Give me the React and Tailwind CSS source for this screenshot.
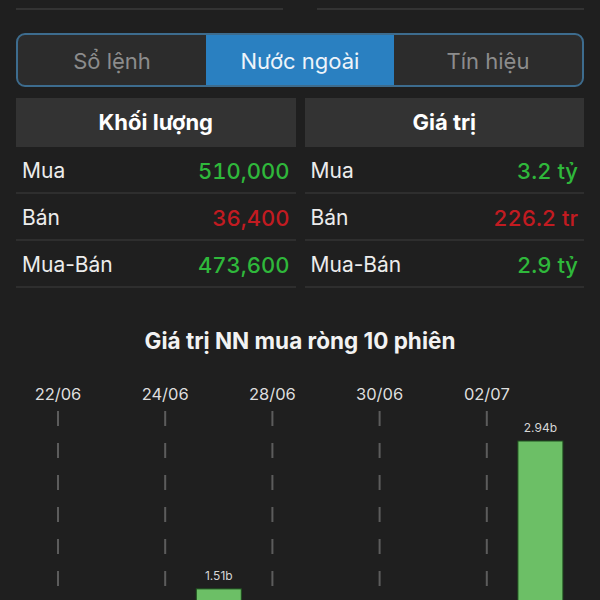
const rowsVolume = [
  { label: 'Mua', value: '510,000', color: 'text-[#2fb83b]' },
  { label: 'Bán', value: '36,400', color: 'text-[#c21b21]' },
  { label: 'Mua-Bán', value: '473,600', color: 'text-[#2fb83b]' },
];

const rowsValue = [
  { label: 'Mua', value: '3.2 tỷ', color: 'text-[#2fb83b]' },
  { label: 'Bán', value: '226.2 tr', color: 'text-[#c21b21]' },
  { label: 'Mua-Bán', value: '2.9 tỷ', color: 'text-[#2fb83b]' },
];

const dates = ['22/06', '24/06', '28/06', '30/06', '02/07'];

function StatColumn({ title, rows }) {
  return (
    <div>
      <div className="flex h-[49px] items-center justify-center bg-[#333333] text-[22px] font-bold text-white">
        {title}
      </div>
      {rows.map((r) => (
        <div
          key={r.label}
          className="flex h-[47px] items-center justify-between border-b-2 border-[#2e2e2e] px-[6px] pt-[3px] text-[21px]"
        >
          <span className="text-[#ececec]">{r.label}</span>
          <span className={`${r.color} text-[22px] font-medium tabular-nums`}>{r.value}</span>
        </div>
      ))}
    </div>
  );
}

function NetChart() {
  const step = 53.6;
  const start = 58;
  const base = 743 - 370;
  const bars = [
    { i: 3, v: 1.51, label: '1.51b' },
    { i: 9, v: 2.94, label: '2.94b' },
  ];
  const k = (base - 69) / 2.94;
  return (
    <svg width="600" height="230" className="mt-[16px] block">
      {dates.map((d, n) => {
        const x = start + step * 2 * n;
        return (
          <g key={d}>
            <text
              x={x}
              y="28"
              textAnchor="middle"
              fill="#dedede"
              fontSize="16.5"
              fontFamily="Inter, sans-serif"
            >
              {d}
            </text>
            <line
              x1={x}
              x2={x}
              y1="39"
              y2="230"
              stroke="#5c5c5c"
              strokeWidth="2"
              strokeDasharray="15 17"
            />
          </g>
        );
      })}
      {bars.map((b) => {
        const cx = start + step * b.i;
        const h = b.v * k;
        return (
          <g key={b.label}>
            <rect
              x={cx - 22.5}
              y={base - h}
              width="45"
              height={h}
              fill="#6cbf66"
              stroke="#1e4f1e"
              strokeWidth="1"
            />
            <text
              x={cx}
              y={base - h - 9}
              textAnchor="middle"
              fill="#d6d6d6"
              fontSize="12"
              fontFamily="Inter, sans-serif"
            >
              {b.label}
            </text>
          </g>
        );
      })}
    </svg>
  );
}

export default function App() {
  return (
    <div className="h-[600px] overflow-hidden bg-[#1f1f1f] font-['Inter',sans-serif]">
      <div className="flex gap-[34px] px-4 pt-2">
        <div className="h-[2px] flex-1 bg-[#333333]" />
        <div className="h-[2px] flex-1 bg-[#333333]" />
      </div>

      <div className="mx-4 mt-[23px] flex h-[54px] overflow-hidden rounded-[9px] border-2 border-[#3d6c8e] bg-[#2c2c2c] text-[22px]">
        <div className="flex flex-1 items-center justify-center pt-[2px] text-[#8c8c8c]">Sổ lệnh</div>
        <div className="flex flex-1 items-center justify-center bg-[#2a80c1] pt-[2px] text-[#eef4fa]">
          Nước ngoài
        </div>
        <div className="flex flex-1 items-center justify-center pt-[2px] text-[#8c8c8c]">Tín hiệu</div>
      </div>

      <div className="mt-[11px] grid grid-cols-2 gap-[9px] px-4">
        <StatColumn title="Khối lượng" rows={rowsVolume} />
        <StatColumn title="Giá trị" rows={rowsValue} />
      </div>

      <h2 className="mt-[38px] text-center text-[22.5px] font-bold leading-[30px] text-[#f2f2f2]">
        Giá trị NN mua ròng 10 phiên
      </h2>

      <NetChart />
    </div>
  );
}
